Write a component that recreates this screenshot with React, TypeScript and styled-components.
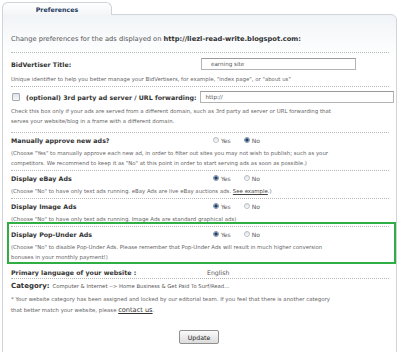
import React from "react";
import styled, { createGlobalStyle } from "styled-components";

const Global = createGlobalStyle`
  html, body { margin: 0; padding: 0; background: #ffffff; }
  body {
    width: 400px; height: 352px; overflow: hidden;
    font-family: "DejaVu Sans", Verdana, sans-serif;
    color: #555;
  }
  * { box-sizing: border-box; }
`;

const Page = styled.div`
  padding: 2px 3px 0 2px;
`;

const TabBar = styled.div`
  display: flex;
  position: relative;
  z-index: 1;
  height: 13px;
`;

const Tab = styled.div`
  width: 110px;
  height: 13px;
  border: 1px solid #cfd4d9;
  border-bottom: none;
  border-radius: 6px 6px 0 0;
  background: linear-gradient(#ffffff, #f3f5f7);
  display: flex;
  align-items: center;
  justify-content: center;
  font-weight: bold;
  font-size: 6.3px;
  color: #1f3b5f;
`;

const Panel = styled.div`
  margin-top: -1px;
  height: 372px;
  border: 1px solid #cfd4d9;
  border-radius: 0 6px 0 0;
  background: linear-gradient(#f1f4f7 0px, #ffffff 42px);
  padding: 18px 7px 0 8px;
`;

const Intro = styled.div`
  font-size: 6.7px;
  line-height: 12px;
  color: #555;
  padding-bottom: 7px;
  border-bottom: 1px dotted #b5b5b5;
  white-space: nowrap;
  b { color: #333; }
`;

const Section = styled.div<{ $pt?: number; $pb?: number; $line?: boolean }>`
  padding-top: ${(p) => p.$pt ?? 1}px;
  padding-bottom: ${(p) => p.$pb ?? 2}px;
  border-bottom: ${(p) => (p.$line === false ? "none" : "1px dotted #b5b5b5")};
`;

const Highlight = styled.div`
  margin: -5px -7px 0 -4px;
  padding: 4px 5px 0 2px;
  border: 2px solid #2fae46;
`;

const HeadRow = styled.div<{ $h?: number }>`
  display: flex;
  align-items: center;
  height: ${(p) => p.$h ?? 12}px;
`;

const Label = styled.div<{ $w?: number }>`
  flex: 0 0 ${(p) => (p.$w ? `${p.$w}px` : "auto")};
  font-weight: bold;
  font-size: 6.3px;
  color: #333;
  white-space: nowrap;
`;

const Desc = styled.div<{ $mt?: number }>`
  margin-top: ${(p) => p.$mt ?? 2}px;
  font-size: 5.4px;
  line-height: 10px;
  color: #666;
  white-space: nowrap;
  a { color: #444; text-decoration: underline; }
`;

const TextInput = styled.div<{ $w?: number; $grow?: boolean; $ml?: number; $mr?: number; $pl?: number }>`
  ${(p) => (p.$grow ? "flex: 1;" : `width: ${p.$w}px;`)}
  margin-left: ${(p) => p.$ml ?? 0}px;
  margin-right: ${(p) => p.$mr ?? 0}px;
  height: 12px;
  border: 1px solid #b3b3b3;
  border-top-color: #9a9a9a;
  background: #fff;
  font-size: 5.6px;
  color: #555;
  display: flex;
  align-items: center;
  padding-left: ${(p) => p.$pl ?? 4}px;
`;

const CheckBox = styled.span`
  flex: 0 0 8px;
  width: 8px;
  height: 8px;
  margin: 0 6px 0 1px;
  border: 1px solid #a3aab1;
  border-radius: 1px;
  background: linear-gradient(#dfe3e7, #f6f7f8);
`;

const RadioGroup = styled.div`
  display: flex;
  align-items: center;
`;

const RadioOption = styled.label`
  display: flex;
  align-items: center;
  gap: 2px;
  margin-right: 13px;
  font-size: 6px;
  color: #555;
`;

const RadioDot = styled.span<{ $on?: boolean }>`
  width: 6px;
  height: 6px;
  border-radius: 50%;
  border: 1px solid ${(p) => (p.$on ? "#7f93a8" : "#b8bfc6")};
  background: ${(p) =>
    p.$on
      ? "radial-gradient(circle, #1d3d66 0 1.4px, #b9c7d6 1.8px)"
      : "linear-gradient(#dfe3e7, #ffffff)"};
`;

const Value = styled.div`
  font-size: 6.2px;
  color: #555;
`;

const CatLabel = styled.span`
  font-weight: bold;
  font-size: 7px;
  color: #333;
`;

const CatValue = styled.span`
  font-size: 5.3px;
  color: #555;
  margin-left: 3px;
`;

const Note = styled.div`
  margin-top: 2px;
  font-size: 5.4px;
  line-height: 11px;
  color: #666;
  white-space: nowrap;
  a { font-size: 6.6px; color: #333; text-decoration: underline; }
`;

const ButtonRow = styled.div`
  display: flex;
  justify-content: center;
  margin-top: 14px;
  padding-right: 2px;
`;

const Button = styled.button`
  width: 40px;
  height: 14px;
  padding: 0;
  border: 1px solid #8f8f8f;
  border-radius: 2px;
  background: linear-gradient(#fbfbfb, #dcdcdc);
  font-family: "DejaVu Sans", Verdana, sans-serif;
  font-size: 6.2px;
  color: #222;
`;

const Radios = ({ yes }: { yes: boolean }) => (
  <RadioGroup>
    <RadioOption>
      <RadioDot $on={yes} />
      Yes
    </RadioOption>
    <RadioOption>
      <RadioDot $on={!yes} />
      No
    </RadioOption>
  </RadioGroup>
);

export default function App() {
  return (
    <>
      <Global />
      <Page>
        <TabBar>
          <Tab>Preferences</Tab>
        </TabBar>
        <Panel>
          <Intro>
            Change preferences for the ads displayed on <b>http://liezl-read-write.blogspot.com:</b>
          </Intro>

          <Section $pt={4}>
            <HeadRow $h={14}>
              <Label $w={190}>BidVertiser Title:</Label>
              <TextInput $w={155} $pl={9}>earning site</TextInput>
            </HeadRow>
            <Desc $mt={3}>
              Unique identifier to help you better manage your BidVertisers, for example, "index page", or "about us"
            </Desc>
          </Section>

          <Section $pt={3} $pb={6}>
            <HeadRow $h={14}>
              <CheckBox />
              <Label>(optional) 3rd party ad server / URL forwarding:</Label>
              <TextInput $grow $ml={4} $mr={-5}>http://</TextInput>
            </HeadRow>
            <Desc>
              Check this box only if your ads are served from a different domain, such as 3rd party ad server or URL forwarding that
              <br />
              serves your website/blog in a frame with a different domain.
            </Desc>
          </Section>

          <Section>
            <HeadRow>
              <Label $w={202}>Manually approve new ads?</Label>
              <Radios yes={false} />
            </HeadRow>
            <Desc>
              (Choose "Yes" to manually approve each new ad, in order to filter out sites you may not wish to publish; such as your
              <br />
              competitors. We recommend to keep it as "No" at this point in order to start serving ads as soon as possible.)
            </Desc>
          </Section>

          <Section>
            <HeadRow>
              <Label $w={202}>Display eBay Ads</Label>
              <Radios yes={true} />
            </HeadRow>
            <Desc>
              (Choose "No" to have only text ads running. eBay Ads are live eBay auctions ads. <a>See example</a>.)
            </Desc>
          </Section>

          <Section>
            <HeadRow>
              <Label $w={202}>Display Image Ads</Label>
              <Radios yes={true} />
            </HeadRow>
            <Desc>
              (Choose "No" to have only text ads running. Image Ads are standard graphical ads)
            </Desc>
          </Section>

          <Highlight>
            <HeadRow>
              <Label $w={202}>Display Pop-Under Ads</Label>
              <Radios yes={true} />
            </HeadRow>
            <Desc>
              (Choose "No" to disable Pop-Under Ads. Please remember that Pop-Under Ads will result in much higher conversion
              <br />
              bonuses in your monthly payment!)
            </Desc>
          </Highlight>

          <Section $pt={2} $pb={0}>
            <HeadRow>
              <Label $w={196}>Primary language of your website :</Label>
              <Value>English</Value>
            </HeadRow>
          </Section>

          <Section $pt={1} $pb={0} $line={false}>
            <HeadRow>
              <CatLabel>Category:</CatLabel>
              <CatValue>Computer &amp; Internet --&gt; Home Business &amp; Get Paid To Surf/Read...</CatValue>
            </HeadRow>
            <Note>
              * Your website category has been assigned and locked by our editorial team. If you feel that there is another category
              <br />
              that better match your website, please <a>contact us</a>.
            </Note>
          </Section>

          <ButtonRow>
            <Button>Update</Button>
          </ButtonRow>
        </Panel>
      </Page>
    </>
  );
}
